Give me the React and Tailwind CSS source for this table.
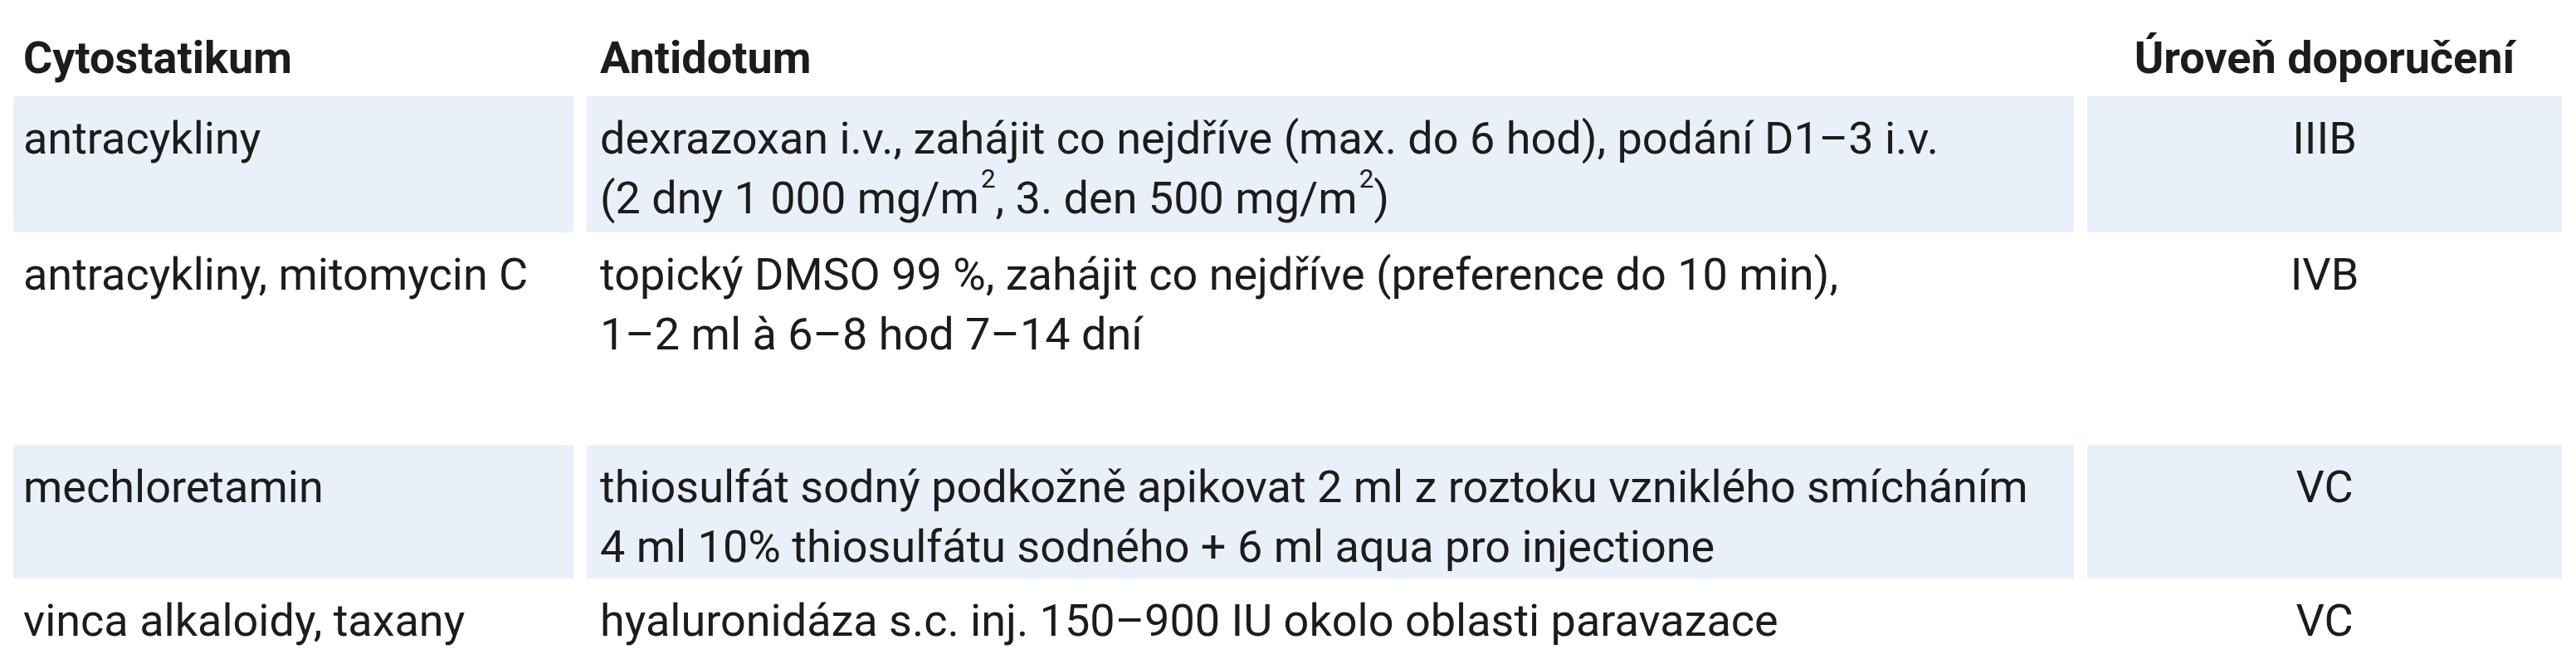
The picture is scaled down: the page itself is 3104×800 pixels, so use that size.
import React from 'react';

const Sup = ({ children }) => (
  <sup className="text-[0.58em] leading-none align-[0.5em] ml-[2px]">{children}</sup>
);

const rows = [
  {
    drug: 'antracykliny',
    antidote: [
      'dexrazoxan i.v., zahájit co nejdříve (max. do 6 hod), podání D1–3 i.v.',
      <>
        (2 dny 1 000 mg/m<Sup>2</Sup>, 3. den 500 mg/m<Sup>2</Sup>)
      </>,
    ],
    level: 'IIIB',
    shaded: true,
    height: 'h-[164px]',
  },
  {
    drug: 'antracykliny, mitomycin C',
    antidote: [
      'topický DMSO 99 %, zahájit co nejdříve (preference do 10 min),',
      '1–2 ml à 6–8 hod 7–14 dní',
    ],
    level: 'IVB',
    shaded: false,
    height: 'h-[256px]',
  },
  {
    drug: 'mechloretamin',
    antidote: [
      'thiosulfát sodný podkožně apikovat 2 ml z roztoku vzniklého smícháním',
      '4 ml 10% thiosulfátu sodného + 6 ml aqua pro injectione',
    ],
    level: 'VC',
    shaded: true,
    height: 'h-[161px]',
  },
  {
    drug: 'vinca alkaloidy, taxany',
    antidote: ['hyaluronidáza s.c. inj. 150–900 IU okolo oblasti paravazace'],
    level: 'VC',
    shaded: false,
    height: 'h-[104px]',
  },
];

const Cell = ({ shaded, className = '', children }) => (
  <div className={`${shaded ? 'bg-[#e9f0fa]' : ''} pt-[15px] ${className}`}>{children}</div>
);

const App = () => {
  return (
    <div className="w-[3104px] h-[800px] overflow-hidden bg-white pl-4 text-[#1d1b1c] font-['Roboto',sans-serif] text-[54px] leading-[72px]">
      <div className="grid grid-cols-[675px_1792px_572px] gap-x-4">
        <div className="h-[116px] pt-[34px] pl-3 font-bold">Cytostatikum</div>
        <div className="h-[116px] pt-[34px] pl-4 font-bold">Antidotum</div>
        <div className="h-[116px] pt-[34px] text-center font-bold">Úroveň doporučení</div>

        {rows.map((row, i) => (
          <React.Fragment key={i}>
            <Cell shaded={row.shaded} className={`${row.height} pl-3`}>
              {row.drug}
            </Cell>
            <Cell shaded={row.shaded} className={`${row.height} pl-4`}>
              {row.antidote.map((line, j) => (
                <div key={j}>{line}</div>
              ))}
            </Cell>
            <Cell shaded={row.shaded} className={`${row.height} text-center`}>
              {row.level}
            </Cell>
          </React.Fragment>
        ))}
      </div>
    </div>
  );
};

export default App;
